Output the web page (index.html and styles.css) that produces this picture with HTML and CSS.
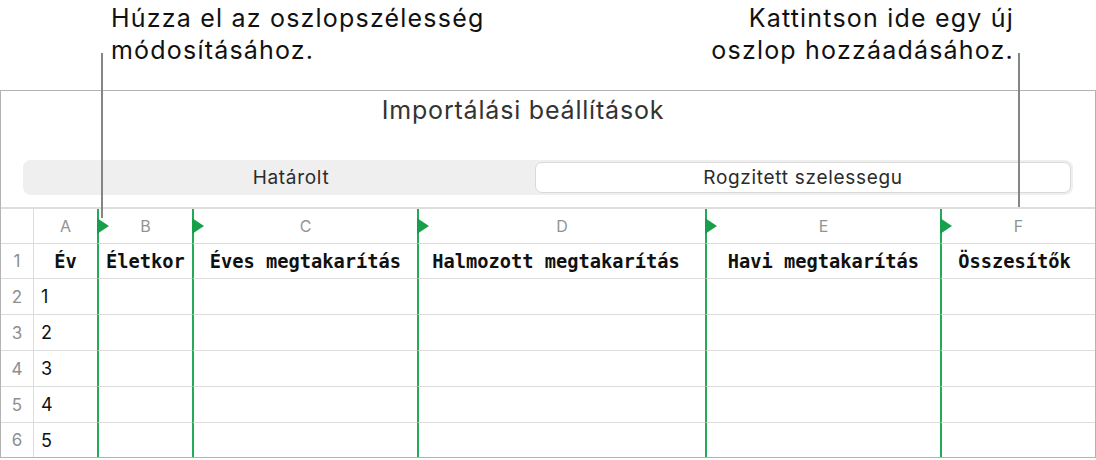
FILE: index.html
```html
<!DOCTYPE html>
<html>
<head>
    <title>Importálási beállítások</title>
    <link rel="stylesheet" href="styles.css">
</head>
<body>
    <div class="figure">
        <div class="callouts">
            <div class="callout callout-left">Húzza el az oszlopszélesség<br>módosításához.</div>
            <div class="callout callout-right">Kattintson ide egy új<br>oszlop hozzáadásához.</div>
        </div>
        <div class="leader leader-left"></div>
        <div class="leader leader-right"></div>

        <div class="panel">
            <div class="panel-title">Importálási beállítások</div>

            <div class="segmented">
                <div class="segment">Határolt</div>
                <div class="segment selected">Rogzitett szelessegu</div>
            </div>

            <div class="sheet">
                <!-- column letters -->
                <div class="cell rownum head"></div>
                <div class="cell letter head">A</div>
                <div class="cell letter head split">B</div>
                <div class="cell letter head split">C</div>
                <div class="cell letter head split">D</div>
                <div class="cell letter head split">E</div>
                <div class="cell letter head split">F</div>

                <!-- header row -->
                <div class="cell rownum r1">1</div>
                <div class="cell title r1">Év</div>
                <div class="cell title r1 col">Életkor</div>
                <div class="cell title r1 col">Éves megtakarítás</div>
                <div class="cell title r1 col nudge-lg">Halmozott megtakarítás</div>
                <div class="cell title r1 col">Havi megtakarítás</div>
                <div class="cell title r1 col nudge">Összesítők</div>

                <div class="cell rownum">2</div>
                <div class="cell value">1</div>
                <div class="cell col"></div>
                <div class="cell col"></div>
                <div class="cell col"></div>
                <div class="cell col"></div>
                <div class="cell col"></div>

                <div class="cell rownum">3</div>
                <div class="cell value">2</div>
                <div class="cell col"></div>
                <div class="cell col"></div>
                <div class="cell col"></div>
                <div class="cell col"></div>
                <div class="cell col"></div>

                <div class="cell rownum">4</div>
                <div class="cell value">3</div>
                <div class="cell col"></div>
                <div class="cell col"></div>
                <div class="cell col"></div>
                <div class="cell col"></div>
                <div class="cell col"></div>

                <div class="cell rownum">5</div>
                <div class="cell value">4</div>
                <div class="cell col"></div>
                <div class="cell col"></div>
                <div class="cell col"></div>
                <div class="cell col"></div>
                <div class="cell col"></div>

                <div class="cell rownum last">6</div>
                <div class="cell value last">5</div>
                <div class="cell col last"></div>
                <div class="cell col last"></div>
                <div class="cell col last"></div>
                <div class="cell col last"></div>
                <div class="cell col last"></div>
            </div>
        </div>
    </div>
</body>
</html>
```

FILE: styles.css
```css
body {
    margin: 0;
    background: white;
    font-family: 'Inter', 'Noto Sans', sans-serif;
    color: #1d1d1f;
}

.figure {
    position: relative;
    width: 1096px;
    height: 460px;
    overflow: hidden;
}

.callouts {
    display: flex;
    justify-content: space-between;
    height: 90px;
    box-sizing: border-box;
    padding-top: 2px;
}

.callout {
    font-size: 25px;
    line-height: 32px;
    letter-spacing: 1.2px;
    color: #111;
}

.callout-left {
    padding-left: 111px;
}

.callout-right {
    padding-right: 82px;
    text-align: right;
}

.leader {
    position: absolute;
    width: 2px;
    background: #858585;
}

.leader-left {
    left: 101px;
    top: 53px;
    height: 165px;
}

.leader-right {
    left: 1018px;
    top: 53px;
    height: 154px;
}

.panel {
    border: 1px solid #b3b3b3;
    background: white;
}

.panel-title {
    padding: 4px 50px 35px 0;
    font-size: 25px;
    line-height: 30px;
    letter-spacing: 0.8px;
    text-align: center;
    color: #333;
}

.segmented {
    display: grid;
    grid-template-columns: 510px 1fr;
    margin: 0 22px 12px;
    padding: 2px;
    height: 35px;
    box-sizing: border-box;
    background: #efefef;
    border-radius: 8px;
}

.segment {
    display: flex;
    align-items: center;
    justify-content: center;
    font-size: 19px;
    letter-spacing: 0.7px;
    color: #2b2b2b;
}

.segment:first-child {
    padding-left: 22px;
}

.segment.selected {
    background: white;
    border: 1px solid #d9d9d9;
    border-radius: 7px;
}

.sheet {
    display: grid;
    grid-template-columns: 33px 63px 95px 225px 288px 235px 155px;
    grid-template-rows: 35px 35px 36px 36px 36px 36px 34px;
    border-top: 2px solid #dedede;
}

.cell {
    position: relative;
    box-sizing: border-box;
    border-bottom: 1px solid #dcdcdc;
    display: flex;
    align-items: center;
    justify-content: center;
}

.cell.last {
    border-bottom: none;
}

.rownum {
    border-right: 1px solid #dcdcdc;
    font-size: 17px;
    color: #8e8e8e;
}

.letter {
    font-size: 16px;
    color: #939393;
}

.split,
.col {
    border-left: 2px solid #22aa55;
}

/* drag handle on each column boundary */
.split::before {
    content: "";
    position: absolute;
    left: -2px;
    top: 50%;
    transform: translateY(-50%);
    border-left: 12px solid #17a04c;
    border-top: 8px solid transparent;
    border-bottom: 8px solid transparent;
}

.title {
    font-family: 'DejaVu Sans Mono', 'Liberation Mono', monospace;
    font-weight: bold;
    font-size: 18.7px;
    color: #111;
}

.title.nudge {
    padding-right: 8px;
}

.title.nudge-lg {
    padding-right: 12px;
}

.value {
    justify-content: flex-start;
    padding-left: 7px;
    font-size: 18px;
    color: #111;
}
```
